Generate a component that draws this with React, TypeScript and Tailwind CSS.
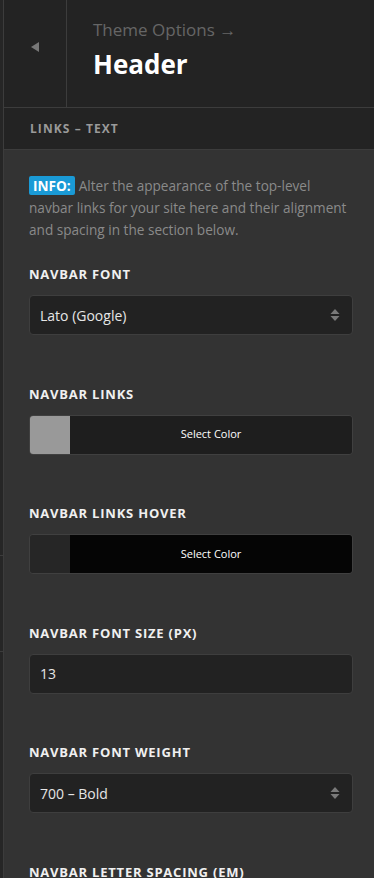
import React from 'react';

const font = { fontFamily: '"Open Sans", "Noto Sans", sans-serif' };

function Label({ children }: { children: React.ReactNode }) {
  return (
    <div className="h-[18px] text-[13px] leading-[18px] font-bold uppercase tracking-[0.06em] text-[#f0f0f0]">
      {children}
    </div>
  );
}

function SelectArrows() {
  return (
    <svg width="10" height="12" viewBox="0 0 10 12" className="text-[#7a7a7a]">
      <path d="M5 0 L9.5 5 H0.5 Z" fill="currentColor" />
      <path d="M5 12 L9.5 7 H0.5 Z" fill="currentColor" />
    </svg>
  );
}

function SelectBox({ value }: { value: string }) {
  return (
    <div className="h-[40px] rounded-[4px] border border-[#3e3e3e] bg-[#222222] flex items-center pl-[10px] pr-[12px]">
      <span className="flex-1 text-[14px] text-[#e6e6e6]">{value}</span>
      <SelectArrows />
    </div>
  );
}

function InputBox({ value }: { value: string }) {
  return (
    <div className="h-[40px] rounded-[4px] border border-[#3e3e3e] bg-[#222222] flex items-center pl-[10px]">
      <span className="text-[14px] text-[#e6e6e6]">{value}</span>
    </div>
  );
}

function ColorPicker({ swatch, fill }: { swatch: string; fill: string }) {
  return (
    <div className="h-[40px] rounded-[4px] border border-[#404040] overflow-hidden flex">
      <div className={`w-[40px] ${swatch}`} />
      <div className={`flex-1 flex items-center justify-center text-[11px] text-white ${fill}`}>
        Select Color
      </div>
    </div>
  );
}

function Field({ label, children }: { label: string; children: React.ReactNode }) {
  return (
    <div className="shrink-0 flex flex-col mb-[49.5px]">
      <Label>{label}</Label>
      <div className="mt-[12px]">{children}</div>
    </div>
  );
}

export default function App() {
  return (
    <div className="w-[374px] h-[878px] overflow-hidden flex bg-[#333333]" style={font}>
      <div className="w-[4px] shrink-0 flex flex-col bg-[#262626] border-r border-[#3c3c3c]">
        <div className="h-[555px] shrink-0" />
        <div className="h-[96px] shrink-0 border-t border-[#3c3c3c]" />
        <div className="flex-1 border-t border-[#3c3c3c]" />
      </div>

      <div className="flex-1 flex flex-col min-w-0">
        <header className="h-[108px] shrink-0 flex bg-[#232323] border-b border-[#3c3c3c]">
          <div className="w-[63px] border-r border-[#3c3c3c] flex justify-center pt-[42px]">
            <svg width="8" height="10" viewBox="0 0 8 10">
              <path d="M0 5 L8 0 V10 Z" fill="#777777" />
            </svg>
          </div>
          <div className="flex flex-col pl-[26px] pt-[18px]">
            <div className="text-[17px] leading-[24px] text-[#666666]">Theme Options →</div>
            <div className="text-[26px] leading-[36px] font-bold text-white mt-[4px]">Header</div>
          </div>
        </header>

        <div className="h-[42px] shrink-0 flex items-center pl-[26px] bg-[#232323] border-b border-[#3c3c3c]">
          <span className="text-[12px] font-bold uppercase tracking-[0.09em] text-[#9a9a9a]">
            Links – Text
          </span>
        </div>

        <div className="flex flex-col pl-[25px] pr-[21px] pt-[25px]">
          <p className="shrink-0 text-[13.6px] leading-[22px] text-[#8a8a8a] mb-[24px]">
            <span className="inline-block bg-[#1a9ad6] text-white font-bold rounded-[2px] px-[4px] leading-[19px] mr-[4px]">
              INFO:
            </span>
            Alter the appearance of the top-level navbar links for your site here and their alignment and spacing in the section below.
          </p>

          <Field label="Navbar Font">
            <SelectBox value="Lato (Google)" />
          </Field>

          <Field label="Navbar Links">
            <ColorPicker swatch="bg-[#999999]" fill="bg-[#1e1e1e]" />
          </Field>

          <Field label="Navbar Links Hover">
            <ColorPicker swatch="bg-[#262626]" fill="bg-[#050505]" />
          </Field>

          <Field label="Navbar Font Size (px)">
            <InputBox value="13" />
          </Field>

          <Field label="Navbar Font Weight">
            <SelectBox value="700 – Bold" />
          </Field>

          <Field label="Navbar Letter Spacing (em)">
            <InputBox value="0.1" />
          </Field>
        </div>
      </div>
    </div>
  );
}
